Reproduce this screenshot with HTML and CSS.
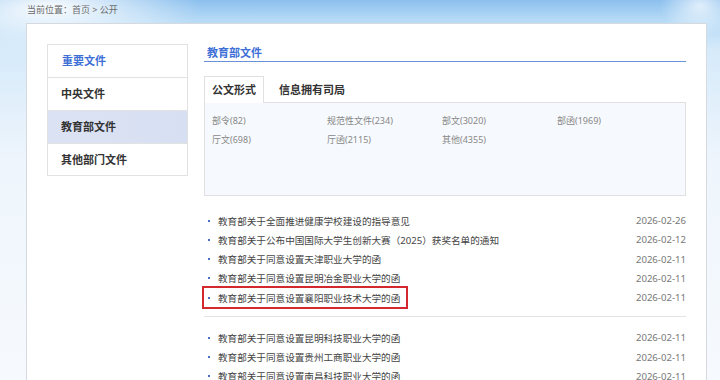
FILE: index.html
```html
<!DOCTYPE html>
<html lang="zh-CN">
<head>
    <meta charset="UTF-8">
    <meta name="viewport" content="width=device-width, initial-scale=1.0">
    <title>公开 - 教育部文件</title>
    <link rel="stylesheet" href="styles.css">
</head>
<body>
    <div class="breadcrumb">当前位置：<a href="#">首页</a> &gt; <a href="#">公开</a></div>

    <div class="page">
        <aside class="sidebar">
            <a href="#" class="side-item top">重要文件</a>
            <a href="#" class="side-item">中央文件</a>
            <a href="#" class="side-item active">教育部文件</a>
            <a href="#" class="side-item">其他部门文件</a>
        </aside>

        <main class="content">
            <h2 class="section-title">教育部文件</h2>

            <div class="tabs">
                <a href="#" class="tab active">公文形式</a>
                <a href="#" class="tab">信息拥有司局</a>
            </div>
            <div class="tab-panel">
                <a href="#">部令(82)</a>
                <a href="#">规范性文件(234)</a>
                <a href="#">部文(3020)</a>
                <a href="#">部函(1969)</a>
                <a href="#">厅文(698)</a>
                <a href="#">厅函(2115)</a>
                <a href="#">其他(4355)</a>
            </div>

            <ul class="doc-list">
                <li><a href="#" class="doc-title"><span class="dot"></span>教育部关于全面推进健康学校建设的指导意见</a><span class="date">2026-02-26</span></li>
                <li><a href="#" class="doc-title"><span class="dot"></span>教育部关于公布中国国际大学生创新大赛（2025）获奖名单的通知</a><span class="date">2026-02-12</span></li>
                <li><a href="#" class="doc-title"><span class="dot"></span>教育部关于同意设置天津职业大学的函</a><span class="date">2026-02-11</span></li>
                <li><a href="#" class="doc-title"><span class="dot"></span>教育部关于同意设置昆明冶金职业大学的函</a><span class="date">2026-02-11</span></li>
                <li><a href="#" class="doc-title marked"><span class="dot"></span>教育部关于同意设置襄阳职业技术大学的函</a><span class="date">2026-02-11</span></li>
            </ul>
            <hr class="divider">
            <ul class="doc-list second">
                <li><a href="#" class="doc-title"><span class="dot"></span>教育部关于同意设置昆明科技职业大学的函</a><span class="date">2026-02-11</span></li>
                <li><a href="#" class="doc-title"><span class="dot"></span>教育部关于同意设置贵州工商职业大学的函</a><span class="date">2026-02-11</span></li>
                <li><a href="#" class="doc-title"><span class="dot"></span>教育部关于同意设置南昌科技职业大学的函</a><span class="date">2026-02-11</span></li>
            </ul>
        </main>
    </div>
</body>
</html>
```

FILE: styles.css
```css
* {
    margin: 0;
    padding: 0;
    box-sizing: border-box;
    font-family: "Noto Sans", "Noto Sans CJK SC", sans-serif;
}

:root {
    --blue: #3d6fd6;
    --line: #e2e2e2;
    --text: #3a3a3a;
    --muted: #888888;
}

body {
    color: var(--text);
    background:
        radial-gradient(ellipse 150px 45px at 50px 8px, rgba(255,255,255,0.95), rgba(255,255,255,0)),
        radial-gradient(ellipse 40px 30px at 700px 6px, rgba(255,255,255,0.7), rgba(255,255,255,0)),
        linear-gradient(to bottom, #8cc0ee 0, #b6daf6 20px, #d6eafa 50px, #eef5fc 160px, #f8fbfe 100%);
    min-height: 380px;
    overflow: hidden;
}

a {
    color: inherit;
    text-decoration: none;
}

.breadcrumb {
    height: 23px;
    padding: 4px 0 0 27px;
    font-size: 9px;
    line-height: 12px;
    color: #6b6b6b;
}

.page {
    margin: 0 13px 0 26px;
    min-height: 400px;
    background: #ffffff;
    border: 1px solid #d6d9de;
    border-bottom: none;
    padding: 20px 20px 0 20px;
    display: grid;
    grid-template-columns: 141px 1fr;
    gap: 16px;
    align-items: start;
}

/* left menu */
.sidebar {
    border: 1px solid var(--line);
    display: flex;
    flex-direction: column;
}

.side-item {
    height: 33px;
    line-height: 32px;
    padding-left: 13px;
    font-size: 11px;
    font-weight: 700;
    color: #333333;
    border-bottom: 1px solid var(--line);
}

.side-item:last-child {
    border-bottom: none;
    height: 31px;
}

.side-item.top {
    color: var(--blue);
    padding-left: 14px;
}

.side-item.active {
    background: linear-gradient(to right, #dbe2f4, #d7e0f2);
}

/* right content */
.section-title {
    height: 18px;
    line-height: 17px;
    padding-left: 3px;
    font-size: 11px;
    font-weight: 700;
    color: var(--blue);
    border-bottom: 1px solid #6891d9;
}

.tabs {
    display: flex;
    margin-top: 14px;
    height: 26px;
}

.tab {
    padding: 0 7px;
    line-height: 26px;
    font-size: 11px;
    font-weight: 700;
    color: #333333;
    border: 1px solid transparent;
    border-bottom: none;
}

.tab + .tab {
    padding-left: 14px;
}

.tab.active {
    background: #ffffff;
    border-color: #e0e0e0;
    height: 27px;
    position: relative;
    z-index: 1;
}

.tab-panel {
    height: 94px;
    background: #f6f9fd;
    border: 1px solid #e0e0e0;
    padding: 8px 7px;
    display: grid;
    grid-template-columns: repeat(4, 115px);
    grid-auto-rows: 19px;
    align-content: start;
}

.tab-panel a {
    font-size: 9px;
    line-height: 19px;
    color: var(--muted);
}

.doc-list {
    list-style: none;
    margin-top: 15px;
}

.doc-list li {
    display: flex;
    justify-content: space-between;
    align-items: center;
    height: 19.25px;
}

.doc-title {
    display: flex;
    align-items: center;
    padding: 0 6px 0 4px;
    height: 19.25px;
    font-size: 9.6px;
    color: #444444;
}

.dot {
    width: 2px;
    height: 2px;
    background: #4a6fc9;
    margin-right: 8px;
}

.doc-title.marked {
    outline: 2px solid #d3282e;
    outline-offset: 0;
    height: 19px;
}

.date {
    font-size: 9.6px;
    color: #777777;
}

.divider {
    border: none;
    border-top: 1px solid #e4e4e4;
    margin-top: 9px;
}

.doc-list.second {
    margin-top: 11px;
}
```
